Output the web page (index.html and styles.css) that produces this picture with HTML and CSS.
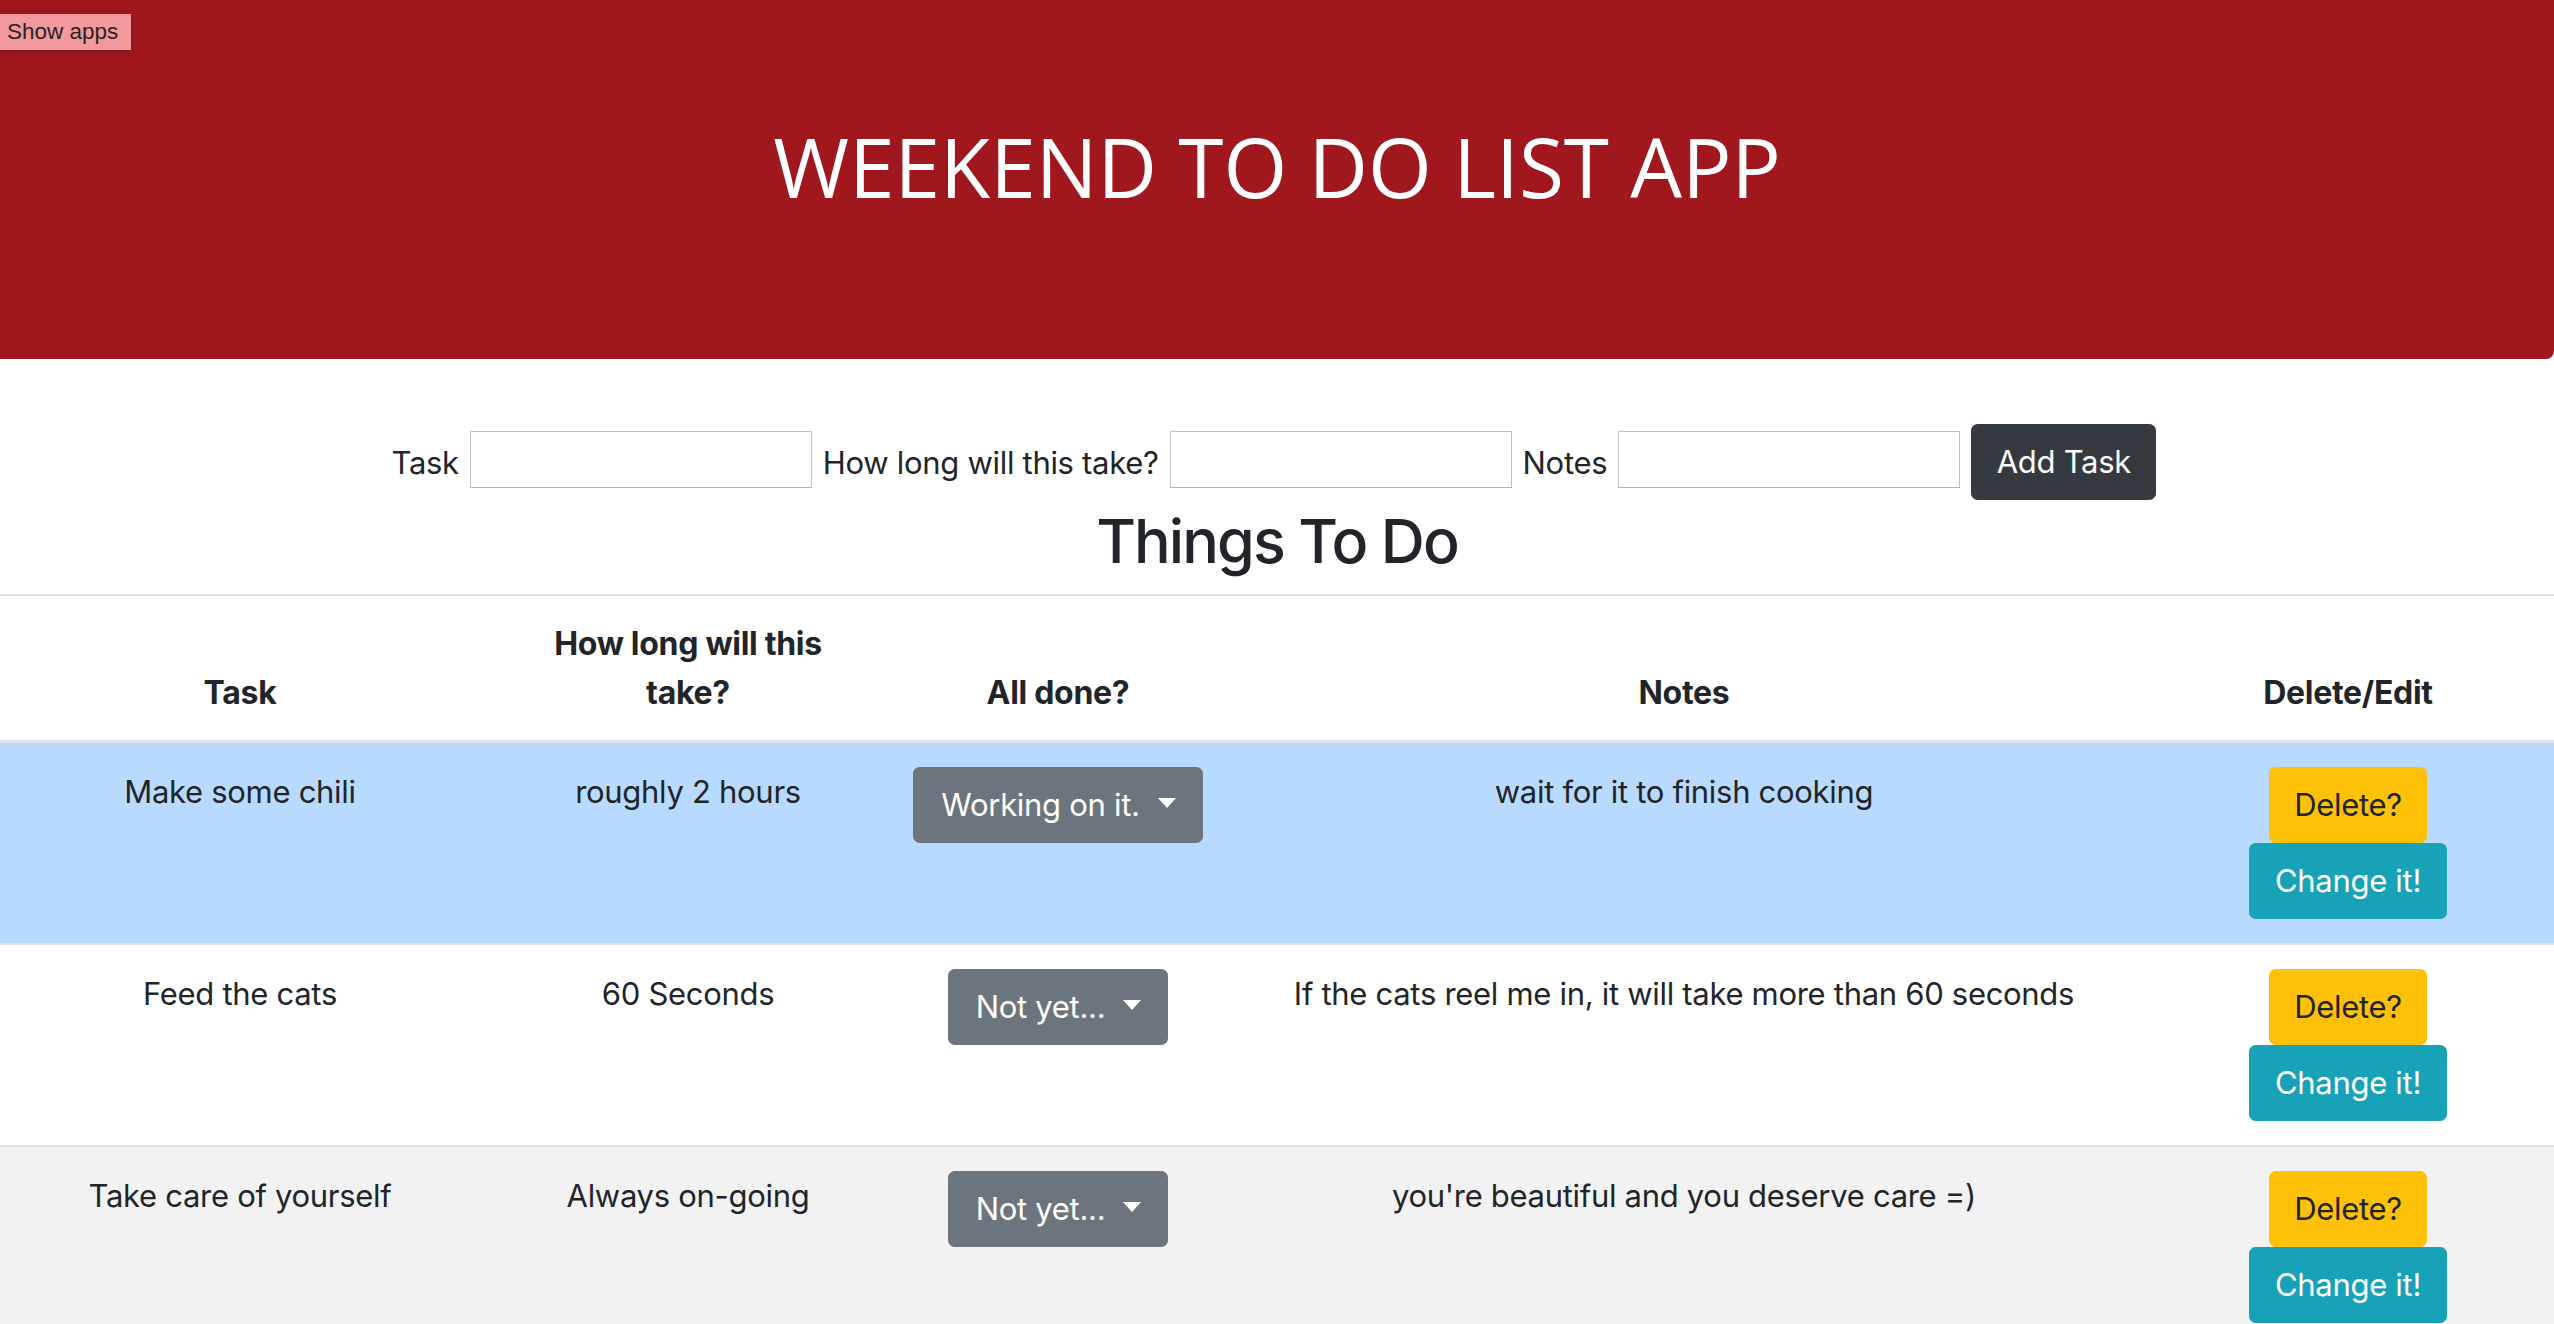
FILE: index.html
```html
<!DOCTYPE html>
<html lang="en">
<head>
<meta charset="utf-8">
<title>Weekend To Do List App</title>
<link rel="stylesheet" href="styles.css">
</head>
<body>
<button class="show-apps" type="button">Show apps</button>
<header class="hero">
  <h1 class="hero-title">WEEKEND TO DO LIST APP</h1>
</header>
<form class="add-form">
  <label for="task">Task</label>
  <input id="task" class="field" type="text">
  <label for="time">How long will this take?</label>
  <input id="time" class="field" type="text">
  <label for="notes">Notes</label>
  <input id="notes" class="field" type="text">
  <button class="btn btn-dark" type="button">Add Task</button>
</form>
<h2 class="list-title">Things To Do</h2>
<table class="todo-table">
  <colgroup>
    <col class="col-task"><col class="col-time"><col class="col-done"><col class="col-notes"><col class="col-actions">
  </colgroup>
  <thead>
    <tr>
      <th>Task</th>
      <th>How long will this<br>take?</th>
      <th>All done?</th>
      <th>Notes</th>
      <th class="cell-actions">Delete/Edit</th>
    </tr>
  </thead>
  <tbody>
    <tr class="row-primary">
      <td>Make some chili</td>
      <td>roughly 2 hours</td>
      <td><button class="btn btn-secondary dropdown" type="button">Working on it.</button></td>
      <td>wait for it to finish cooking</td>
      <td class="cell-actions"><div class="actions"><button class="btn btn-warning" type="button">Delete?</button><button class="btn btn-info" type="button">Change it!</button></div></td>
    </tr>
    <tr>
      <td>Feed the cats</td>
      <td>60 Seconds</td>
      <td><button class="btn btn-secondary dropdown" type="button">Not yet...</button></td>
      <td>If the cats reel me in, it will take more than 60 seconds</td>
      <td class="cell-actions"><div class="actions"><button class="btn btn-warning" type="button">Delete?</button><button class="btn btn-info" type="button">Change it!</button></div></td>
    </tr>
    <tr class="row-striped">
      <td>Take care of yourself</td>
      <td>Always on-going</td>
      <td><button class="btn btn-secondary dropdown" type="button">Not yet...</button></td>
      <td>you're beautiful and you deserve care =)</td>
      <td class="cell-actions"><div class="actions"><button class="btn btn-warning" type="button">Delete?</button><button class="btn btn-info" type="button">Change it!</button></div></td>
    </tr>
  </tbody>
</table>
</body>
</html>
```

FILE: styles.css
```css
html {
  scrollbar-width: none;
}
html::-webkit-scrollbar {
  display: none;
}
body {
  margin: 0;
  font-family: Inter, "Noto Sans", "Liberation Sans", sans-serif;
  font-size: 31px;
  letter-spacing: -0.3px;
  line-height: 49px;
  color: #212529;
  background: #fff;
}

.show-apps {
  position: absolute;
  left: 0;
  top: 14px;
  height: 36px;
  padding: 0 13px 0 7px;
  border: none;
  background: #f1999d;
  color: #2b2323;
  font-family: "Liberation Sans", Arial, sans-serif;
  font-size: 22.5px;
  letter-spacing: 0;
  line-height: 36px;
  box-shadow: 0 2px 6px rgba(0, 0, 0, 0.25);
  cursor: pointer;
}

.hero {
  height: 359px;
  box-sizing: border-box;
  padding-top: 118px;
  background: #a0181e;
  border-bottom-right-radius: 8px;
}
.hero-title {
  margin: 0;
  text-align: center;
  color: #fff;
  font-family: "Open Sans", "Noto Sans", sans-serif;
  font-weight: 400;
  font-size: 82px;
  letter-spacing: 0;
  line-height: 97px;
}

.add-form {
  display: flex;
  justify-content: center;
  align-items: center;
  gap: 11px;
  padding-top: 65px;
  padding-right: 6px;
}
.add-form label {
  line-height: 49px;
}
.field {
  width: 342px;
  height: 57px;
  box-sizing: border-box;
  margin-top: -5px;
  border: 1px solid #c3c3c3;
  border-bottom-color: #b5b5b5;
  background: #fff;
  font-size: 20px;
}

.btn {
  display: inline-block;
  box-sizing: border-box;
  padding: 12px 24.5px;
  border: 1px solid transparent;
  border-radius: 6.5px;
  font-family: inherit;
  font-size: 31px;
  letter-spacing: -0.3px;
  line-height: 50px;
  font-weight: 400;
  text-align: center;
  cursor: pointer;
}
.btn-dark {
  background: #343a40;
  border-color: #343a40;
  color: #fff;
}
.btn-secondary {
  background: #6c757d;
  border-color: #6c757d;
  color: #fff;
}
.btn-warning {
  background: #ffc107;
  border-color: #ffc107;
  color: #212529;
}
.btn-info {
  background: #17a2b8;
  border-color: #17a2b8;
  color: #fff;
}
.dropdown {
  padding-left: 27px;
  padding-right: 26px;
}
.dropdown::after {
  content: "";
  display: inline-block;
  margin-left: 18px;
  vertical-align: 8px;
  border-top: 10px solid #fff;
  border-left: 9.5px solid transparent;
  border-right: 9.5px solid transparent;
}

.list-title {
  margin: 2px 0 14px;
  text-align: center;
  font-size: 61px;
  letter-spacing: -1.9px;
  line-height: 78px;
  font-weight: 500;
  color: #212529;
}

.todo-table {
  width: 100%;
  table-layout: fixed;
  border-collapse: collapse;
}
.col-task { width: 480px; }
.col-time { width: 416px; }
.col-done { width: 324px; }
.col-notes { width: 928px; }
.col-actions { width: 406px; }

.todo-table th {
  padding: 23px 10px;
  border-top: 2px solid #dee2e6;
  border-bottom: 3px solid #dee2e6;
  vertical-align: bottom;
  text-align: center;
  font-size: 32px;
  letter-spacing: -0.3px;
  font-weight: 700;
}
.todo-table td {
  padding: 24px 10px;
  border-top: 2px solid #dee2e6;
  vertical-align: top;
  text-align: center;
}
.todo-table .cell-actions {
  padding-right: 16px;
}
.row-primary {
  background: #b8daff;
}
.row-striped {
  background: #f2f2f2;
}
.actions {
  display: flex;
  flex-direction: column;
  align-items: center;
}
```
